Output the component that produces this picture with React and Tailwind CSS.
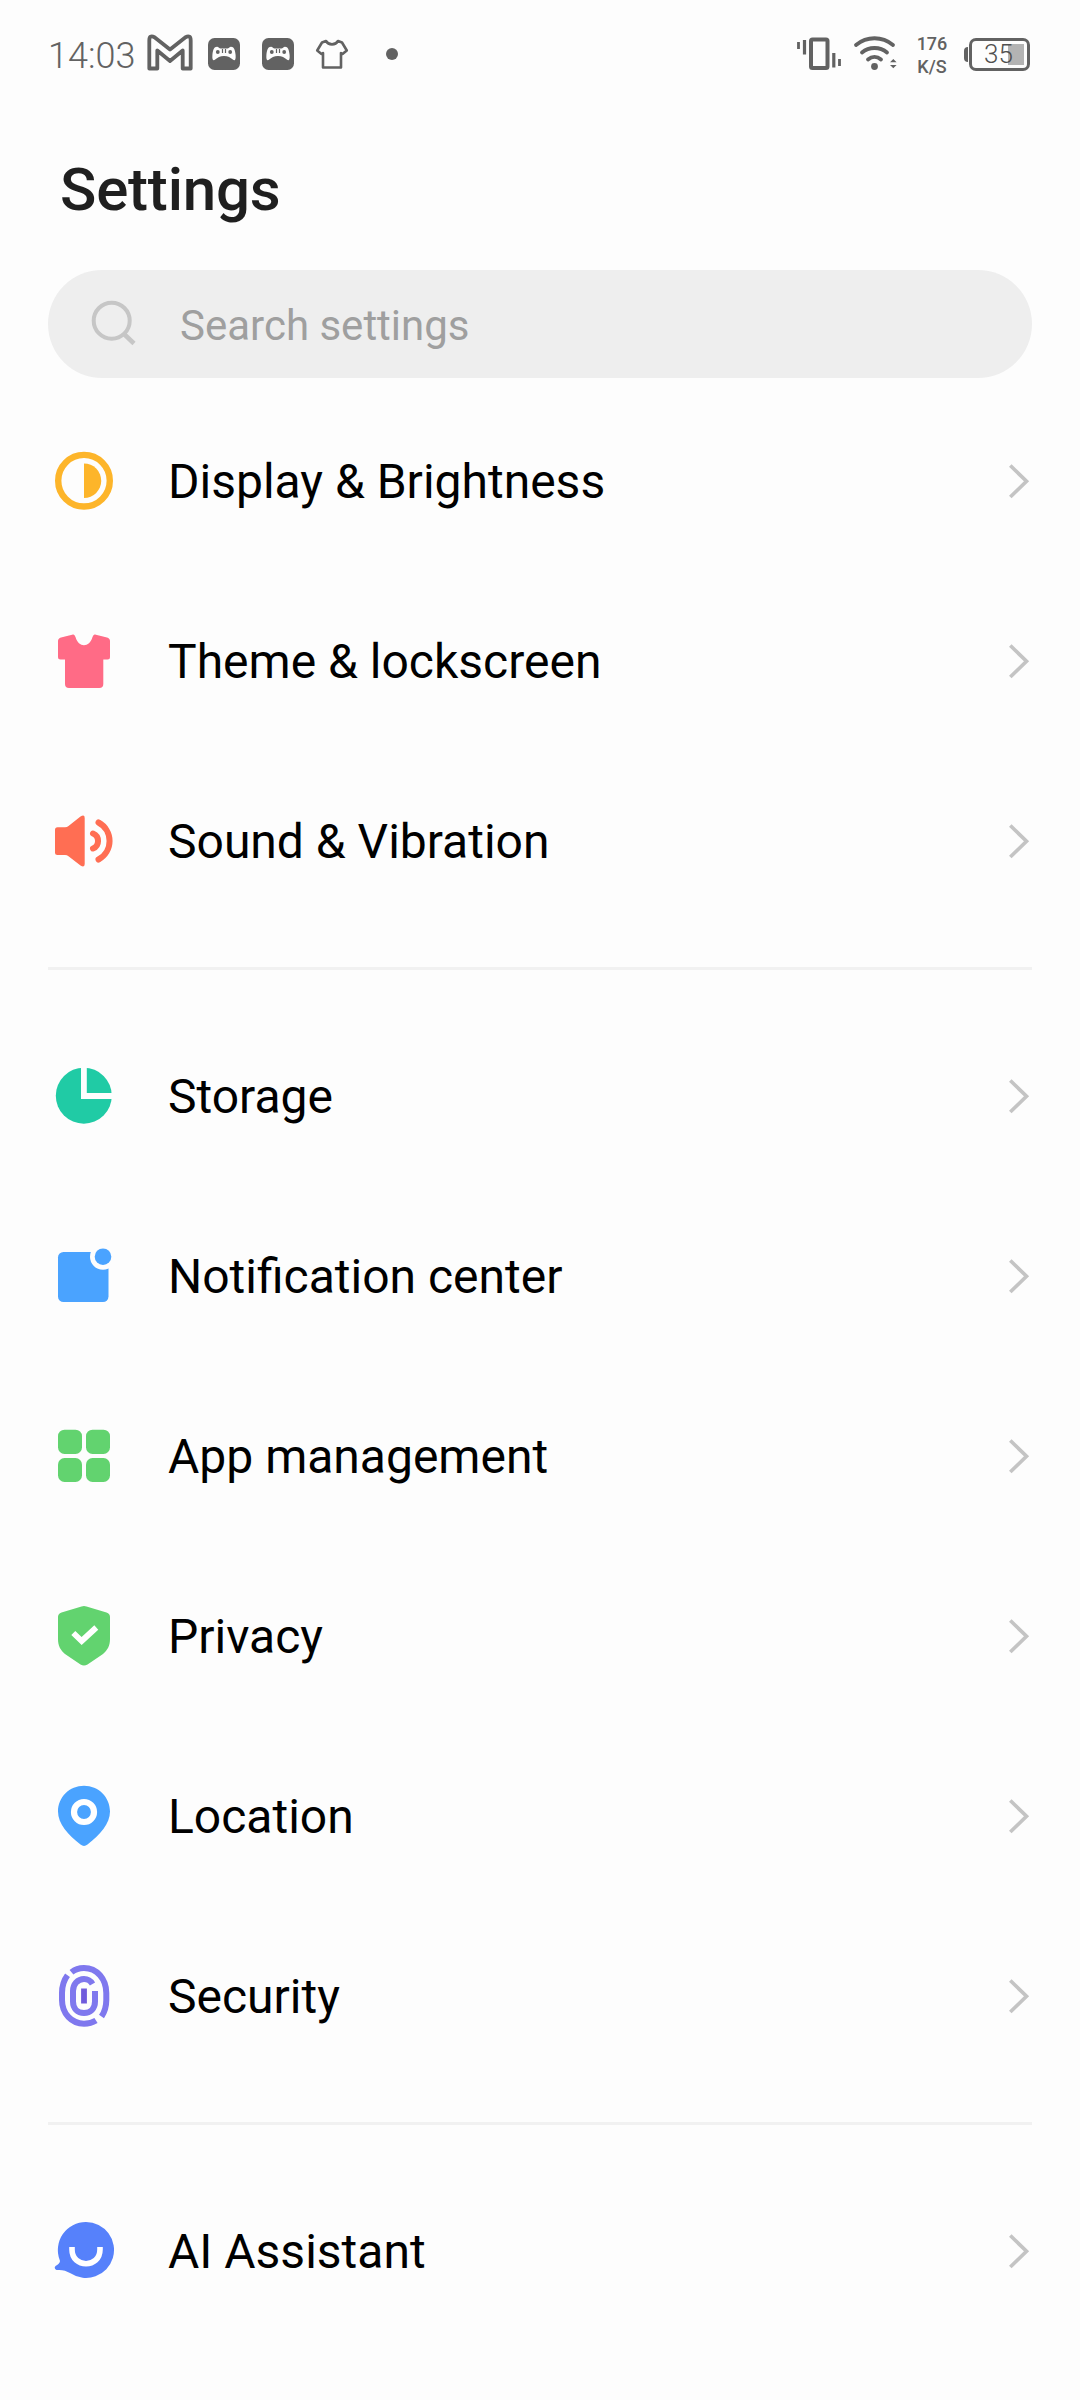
const groups = [
  [
    { label: 'Display & Brightness', icon: DisplayIcon },
    { label: 'Theme & lockscreen', icon: ThemeIcon },
    { label: 'Sound & Vibration', icon: SoundIcon },
  ],
  [
    { label: 'Storage', icon: StorageIcon },
    { label: 'Notification center', icon: NotificationIcon },
    { label: 'App management', icon: AppsIcon },
    { label: 'Privacy', icon: PrivacyIcon },
    { label: 'Location', icon: LocationIcon },
    { label: 'Security', icon: SecurityIcon },
  ],
  [{ label: 'AI Assistant', icon: AssistantIcon }],
]

export default function App() {
  return (
    <div className="w-[1080px] h-[2400px] overflow-hidden bg-[#fdfdfd] font-[Roboto,sans-serif]">
      <StatusBar />
      <h1 className="h-[162px] pl-[60px] pt-[47px] text-[60px] leading-[70px] font-medium tracking-[-0.2px] text-[#1f1f1f]">
        Settings
      </h1>
      <SearchBar />
      <div className="px-12 pt-[13px]">
        {groups.map((items, i) => (
          <div key={i}>
            {i > 0 && (
              <div className="h-[75px] flex items-center">
                <div className="h-[3px] w-full bg-[#f1f1f1]" />
              </div>
            )}
            {items.map(item => (
              <SettingRow key={item.label} label={item.label} icon={item.icon} />
            ))}
          </div>
        ))}
      </div>
    </div>
  )
}

function StatusBar() {
  return (
    <div className="h-[108px] pl-12 pr-[50px] flex items-center justify-between text-[#626262]">
      <div className="flex items-center">
        <span className="w-[98px] text-[36px] leading-[48px] font-light whitespace-nowrap pt-[3px]">14:03</span>
        <MailIcon />
        <GamepadIcon className="ml-[14px]" />
        <GamepadIcon className="ml-[22px]" />
        <svg width="34" height="32" viewBox="0 0 34 32" className="ml-[21px]" fill="none" stroke="currentColor" strokeWidth="2.600" strokeLinejoin="round">
          <path d="M11 3C13.5 7.5 20.500 7.500 23 3L27 4.500L31.800 12.500L27.500 16L26 15V29.500H8V15L6.500 16L2.200 12.500L7 4.500Z" />
        </svg>
        <div className="ml-[37px] size-3 rounded-full bg-[#626262]" />
      </div>
      <div className="flex items-center">
        <svg width="48" height="40" viewBox="796 34 48 40" fill="none" stroke="currentColor">
          <rect x="812" y="39.500" width="16.500" height="28.500" rx="1.500" strokeWidth="4" />
          <path d="M805.500 40V54.500M834.800 53V67.500" strokeWidth="3.200" />
          <path d="M799.500 42V49M840.500 59V66" strokeWidth="2.800" />
        </svg>
        <svg width="46" height="40" viewBox="853 34 46 40" className="ml-[9px]" fill="none" stroke="currentColor" strokeWidth="3.800" strokeLinecap="round">
          <path d="M857 45C868 36 883 36 894 45" />
          <path d="M863 52.500C870 46.500 881 46.500 888 52.500" />
          <path d="M869 59.500C873 56 878 56 882 59.500" />
          <circle cx="875.500" cy="66.500" r="3.400" fill="currentColor" stroke="none" />
          <path d="M891 62.200L894.300 59L897.600 62.200ZM891 65L894.300 68.200L897.600 65Z" fill="currentColor" stroke="none" />
        </svg>
        <div className="ml-[17px] w-[34px] pt-px flex flex-col items-center text-[18px] leading-[23px] font-medium">
          <span>176</span>
          <span>K/S</span>
        </div>
        <div className="ml-[15px] w-1 h-[15px] rounded-l-sm bg-[#626262]" />
        <div className="relative ml-px w-[61px] h-[33px] rounded-[7px] border-[3px] border-[#626262] flex items-center">
          <div className="absolute right-[3px] top-[3px] w-[16px] h-[21px] bg-[#b3b3b3]" />
          <span className="relative pl-[12px] text-[26px] leading-[27px] font-light text-[#4f4f4f]">35</span>
        </div>
      </div>
    </div>
  )
}

function MailIcon() {
  return (
    <svg width="48" height="48" viewBox="0 0 48 48" fill="none" stroke="currentColor" strokeWidth="3.800" strokeLinejoin="round">
      <path d="M3.300 38.500V10.500Q3.300 4.500 8.500 7.200L24 19.500L39.500 7.200Q44.700 4.500 44.700 10.500V38.500H36.700V20.500L24 31L11.300 20.500V38.500Z" />
    </svg>
  )
}

function GamepadIcon({ className }) {
  return (
    <svg width="32" height="32" viewBox="0 0 32 32" className={className}>
      <rect width="32" height="32" rx="6.500" fill="currentColor" />
      <path d="M9 8.700C6 8.700 4.800 12 4.400 17C4 22 5.200 23 7.200 21.600C9.500 19.500 12 18 16 18C20 18 22.500 19.500 24.800 21.600C26.800 23 28 22 27.600 17C27.200 12 26 8.700 23 8.700C21.500 8.700 20.500 10.500 19.500 10.500H12.500C11.500 10.500 10.500 8.700 9 8.700Z" fill="#fdfdfd" />
      <circle cx="9.800" cy="14" r="1.900" fill="currentColor" />
      <circle cx="22.200" cy="14" r="1.900" fill="currentColor" />
      <path d="M14.500 11V15M17.500 11V15" stroke="currentColor" strokeWidth="1.200" />
    </svg>
  )
}

function SearchBar() {
  return (
    <div className="mx-12 h-[108px] rounded-full bg-[#eeeeee] flex items-center">
      <svg width="48" height="48" viewBox="0 0 48 48" className="ml-[42px]" fill="none" stroke="#c6c6c6" strokeWidth="4">
        <circle cx="21.700" cy="20.700" r="18" />
        <path d="M34.500 34.500L44 43.500" strokeWidth="4.500" />
      </svg>
      <span className="ml-[42px] pt-[3px] text-[42px] leading-[50px] text-[#9f9f9f]">Search settings</span>
    </div>
  )
}

function SettingRow({ label, icon: Icon }) {
  return (
    <div className="h-[180px] flex items-center">
      <Icon />
      <span className="ml-12 pt-[2px] text-[48px] leading-[56px] text-black">{label}</span>
      <svg width="24" height="40" viewBox="0 0 24 40" className="ml-auto" fill="none" stroke="#c4c4c4" strokeWidth="3.700">
        <path d="M2.300 4.500L18.500 20.300L2.300 36" />
      </svg>
    </div>
  )
}

function RowIcon({ children }) {
  return (
    <svg width="72" height="72" viewBox="0 0 72 72" fill="none" className="shrink-0">
      {children}
    </svg>
  )
}

function DisplayIcon() {
  return (
    <RowIcon>
      <circle cx="36" cy="35.700" r="25.800" stroke="#fdb52a" strokeWidth="6.400" />
      <path d="M36 18.500A17.200 17.200 0 0 1 36 53Z" fill="#fdb52a" />
    </RowIcon>
  )
}

function ThemeIcon() {
  return (
    <RowIcon>
      <path
        d="M13 12.500L25 9.500Q26.500 9 27.500 12C30.500 23 41.500 23 44.500 12Q45.500 9 47 9.500L59 12.500Q62 13.500 62 16V32Q62 34.500 59.500 34.500H55.300V59Q55.300 63 51.300 63H21Q17 63 17 59V34.500H12.500Q10 34.500 10 32V16Q10 13.500 13 12.500Z"
        fill="#ff6b86"
      />
    </RowIcon>
  )
}

function SoundIcon() {
  return (
    <RowIcon>
      <path
        d="M9.500 22.300H17Q19 22.300 20.500 21L32.500 11.500Q36.700 9 36.700 13V59Q36.700 63 32.500 60.500L20.500 51.300Q19 50 17 50H9.500Q7 50 7 47.500V24.800Q7 22.300 9.500 22.300Z"
        fill="#ff6e53"
      />
      <path d="M45 28.500A8.100 8.100 0 0 1 45 43.500M50.500 17.500A21 21 0 0 1 50.500 54.500" stroke="#ff6e53" strokeWidth="6" strokeLinecap="round" />
    </RowIcon>
  )
}

function StorageIcon() {
  return (
    <RowIcon>
      <circle cx="35.800" cy="35.700" r="28" fill="#20cba5" />
      <path d="M35.900 5V36H66" stroke="#fdfdfd" strokeWidth="5.800" />
    </RowIcon>
  )
}

function NotificationIcon() {
  return (
    <RowIcon>
      <rect x="10" y="12" width="50.500" height="50" rx="5.500" fill="#4aa3ff" />
      <circle cx="55" cy="16.700" r="13" fill="#fdfdfd" />
      <circle cx="55" cy="16.700" r="8.300" fill="#4aa3ff" />
    </RowIcon>
  )
}

function AppsIcon() {
  return (
    <RowIcon>
      <g fill="#62d36f">
        <rect x="10" y="9.700" width="24" height="24.300" rx="6.500" />
        <rect x="38" y="9.700" width="24" height="24.300" rx="6.500" />
        <rect x="10" y="38" width="24" height="24" rx="6.500" />
        <rect x="38" y="38" width="24" height="24" rx="6.500" />
      </g>
    </RowIcon>
  )
}

function PrivacyIcon() {
  return (
    <RowIcon>
      <path
        d="M33.500 6.500Q36 5.500 38.500 6.500L58.500 12.500Q62 13.700 62 17V39C62 46 59.500 50 55 54L39.500 64.500Q36 66.500 32.500 64.500L17 54C12.500 50 10 46 10 39V17Q10 13.700 13.500 12.500Z"
        fill="#62d36f"
      />
      <path d="M25.300 33L33.700 41L48.300 27.500" stroke="#fff" strokeWidth="5.800" />
    </RowIcon>
  )
}

function LocationIcon() {
  return (
    <RowIcon>
      <path d="M36 5.700C50.500 5.700 62 17 62 31.500C62 44 52 54.500 39.500 64.500Q36 67.300 32.500 64.500C20 54.500 10 44 10 31.500C10 17 21.500 5.700 36 5.700Z" fill="#4aa3ff" />
      <circle cx="36" cy="32" r="10" stroke="#fff" strokeWidth="6.200" />
    </RowIcon>
  )
}

// three nested ridges, each left open where the print breaks
function SecurityIcon() {
  return (
    <RowIcon>
      <g stroke="#7f78ee" strokeWidth="6" strokeLinecap="butt">
        <path d="M23.500 12.200C27 9.300 31.500 8 36 8C49 8 58.300 19 58.300 33V40C58.300 46.500 56.700 51.800 53.500 56.500" />
        <path d="M19.500 15.300C16 20 14 26 14 33V40C14 53.500 23.500 63.700 36 63.700C40.500 63.700 44.500 62.700 48 60.500" />
        <path d="M44.500 24C42.500 20.500 39.700 19 36 19C29.500 19 25 24.500 25 31V41.500C25 48.500 29.500 53 36 53C42.500 53 47 48.500 47 41.500V31" />
      </g>
      <path d="M36 28.500V43.500" stroke="#6f5bdc" strokeWidth="5.800" />
    </RowIcon>
  )
}

function AssistantIcon() {
  return (
    <RowIcon>
      <path d="M38 7A28 28 0 1 1 22.500 58.300C18 55.500 14 54.500 8.500 55Q5.500 53.500 7.500 51C11.500 48.500 12.500 47 11.700 45A28 28 0 0 1 38 7Z" fill="#5681fb" />
      <path d="M24 32V34.500C24 53.500 52 53.500 52 34.500V32" stroke="#fff" strokeWidth="5.600" />
    </RowIcon>
  )
}
